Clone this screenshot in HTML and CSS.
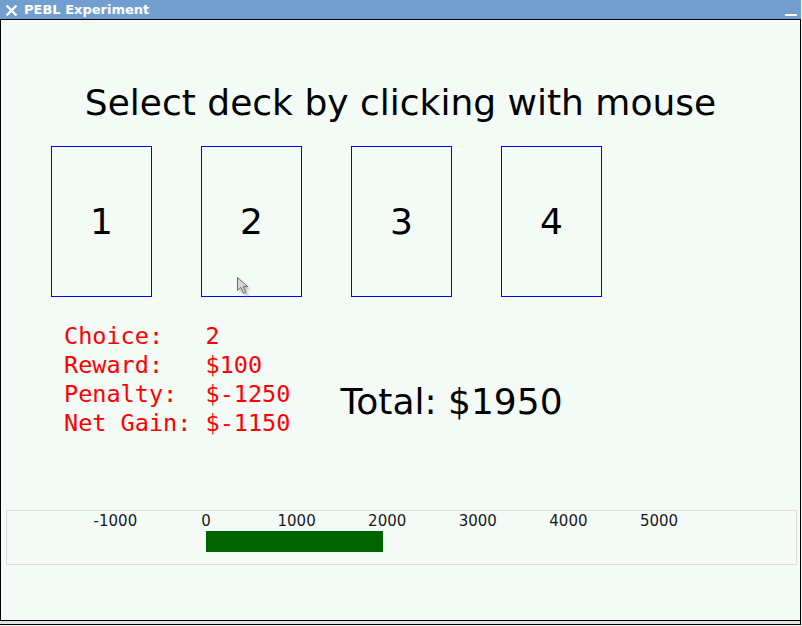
FILE: index.html
```html
<!DOCTYPE html>
<html>
<head>
<meta charset="utf-8">
<title>PEBL Experiment</title>
<link rel="stylesheet" href="styles.css">
</head>
<body>
<div class="window">
  <div class="titlebar">
    <svg class="close-icon" width="13" height="13" viewBox="0 0 13 13">
      <path d="M1.5 1.5 L11.5 11.5 M11.5 1.5 L1.5 11.5" stroke="#fff" stroke-width="2.4" stroke-linecap="butt" fill="none"/>
    </svg>
    <span class="title">PEBL Experiment</span>
    <span class="minimize"></span>
  </div>
  <div class="content">
    <h1 class="prompt">Select deck by clicking with mouse</h1>
    <div class="decks">
      <div class="deck">1</div>
      <div class="deck">2</div>
      <div class="deck">3</div>
      <div class="deck">4</div>
    </div>
    <div class="info-row">
      <pre class="feedback">Choice:   2
Reward:   $100
Penalty:  $-1250
Net Gain: $-1150</pre>
      <div class="total">Total: $1950</div>
    </div>
    <div class="chart">
      <div class="axis">
        <span class="tick" style="left:108.4px">-1000</span>
        <span class="tick" style="left:199px">0</span>
        <span class="tick" style="left:289.6px">1000</span>
        <span class="tick" style="left:380.2px">2000</span>
        <span class="tick" style="left:470.8px">3000</span>
        <span class="tick" style="left:561.4px">4000</span>
        <span class="tick" style="left:652px">5000</span>
      </div>
      <div class="bar-track">
        <div class="bar" style="margin-left:199px;width:177px"></div>
      </div>
    </div>
    <svg class="cursor" width="20" height="24" viewBox="0 0 20 24">
      <defs>
        <filter id="blur" x="-50%" y="-50%" width="200%" height="200%">
          <feGaussianBlur stdDeviation="1.2"/>
        </filter>
      </defs>
      <path d="M3.5 3.5 L3.5 16.5 L6.8 13.4 L9.4 19.4 L11.8 18.4 L9.3 12.6 L13.8 12.6 Z" fill="#9a9a9a" opacity="0.55" filter="url(#blur)"/>
      <path d="M0.5 0.5 L0.5 13.5 L3.8 10.4 L6.4 16.4 L8.8 15.4 L6.3 9.6 L10.8 9.6 Z" fill="#d6d6d6" stroke="#6a6a6a" stroke-width="1" stroke-linejoin="miter"/>
    </svg>
  </div>
  <div class="statusbar"></div>
</div>
</body>
</html>
```
FILE: styles.css
```css
html, body {
  margin: 0;
  padding: 0;
  background: #f4faf6;
}

.window {
  width: 801px;
  height: 626px;
  display: flex;
  flex-direction: column;
  background: #f4faf6;
}

.titlebar {
  height: 19px;
  border-bottom: 1px solid #000;
  background: #729fcf;
  display: flex;
  align-items: center;
  position: relative;
  color: #fff;
}

.close-icon {
  margin-left: 5px;
  margin-top: 1px;
  flex: none;
}

.title {
  margin-left: 6px;
  font-family: "DejaVu Sans", sans-serif;
  font-weight: bold;
  font-size: 13px;
  line-height: 19px;
}

.minimize {
  margin-left: auto;
  margin-right: 4px;
  margin-top: 10px;
  width: 12px;
  height: 2px;
  background: #fff;
}

.content {
  position: relative;
  height: 600px;
  border-left: 1px solid #000;
  border-right: 1px solid #000;
  border-bottom: 1px solid #000;
  display: flex;
  flex-direction: column;
  background: #f4faf6;
}

.prompt {
  margin: 62px 0 0 0;
  font-family: "DejaVu Sans", sans-serif;
  font-weight: normal;
  font-size: 36px;
  line-height: 42px;
  text-align: center;
  color: #000;
}

.decks {
  display: flex;
  gap: 49px;
  margin: 22px 0 0 50px;
}

.deck {
  box-sizing: border-box;
  width: 101px;
  height: 151px;
  border: 1px solid #0000ff;
  display: flex;
  align-items: center;
  justify-content: center;
  font-family: "DejaVu Sans", sans-serif;
  font-size: 36px;
  color: #000;
}

.info-row {
  display: flex;
  align-items: flex-start;
  margin-top: 25px;
}

.feedback {
  margin: 0 0 0 63px;
  font-family: "DejaVu Sans Mono", monospace;
  font-size: 23.5px;
  line-height: 29px;
  color: #ff0000;
}

.total {
  margin: 60px 0 0 50px;
  font-family: "DejaVu Sans", sans-serif;
  font-size: 36px;
  line-height: 40px;
  color: #000;
}

.chart {
  box-sizing: border-box;
  width: 791px;
  height: 55px;
  margin: 72px 0 0 5px;
  border: 1px solid #dcdedc;
}

.axis {
  position: relative;
  height: 17px;
  margin-top: 2px;
}

.tick {
  position: absolute;
  top: 0;
  transform: translateX(-50%);
  font-family: "DejaVu Sans", sans-serif;
  font-size: 15px;
  line-height: 17px;
  color: #1a1a1a;
  white-space: nowrap;
}

.bar-track {
  margin-top: 1px;
  display: flex;
}

.bar {
  height: 21px;
  background: #006400;
}

.cursor {
  position: absolute;
  left: 235.5px;
  top: 256.5px;
}

.statusbar {
  height: 3px;
  background: #e2e2e2;
  border-bottom: 1px solid #000;
  border-right: 1px solid #000;
  width: 800px;
}
```
